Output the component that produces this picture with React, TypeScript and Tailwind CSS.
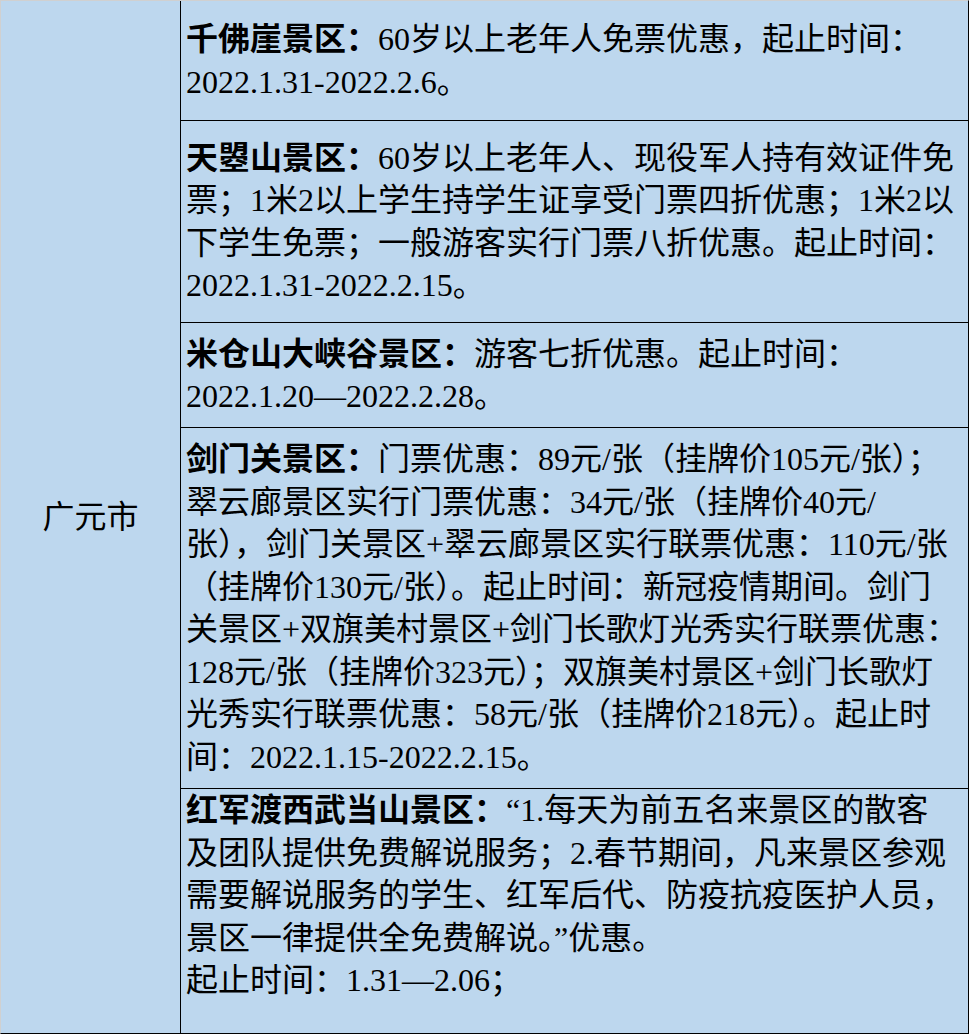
const rows: { h: string; align: string; title: string; lines: string[] }[] = [
  {
    h: 'h-[120px] border-b',
    align: 'justify-center',
    title: '千佛崖景区：',
    lines: ['60岁以上老年人免票优惠，起止时间：', '2022.1.31-2022.2.6。'],
  },
  {
    h: 'h-[202px] border-b',
    align: 'justify-center',
    title: '天曌山景区：',
    lines: [
      '60岁以上老年人、现役军人持有效证件免',
      '票；1米2以上学生持学生证享受门票四折优惠；1米2以',
      '下学生免票；一般游客实行门票八折优惠。起止时间：',
      '2022.1.31-2022.2.15。',
    ],
  },
  {
    h: 'h-[105px] border-b',
    align: 'justify-center',
    title: '米仓山大峡谷景区：',
    lines: ['游客七折优惠。起止时间：', '2022.1.20—2022.2.28。'],
  },
  {
    h: 'h-[361px] border-b',
    align: 'justify-center',
    title: '剑门关景区：',
    lines: [
      '门票优惠：89元/张（挂牌价105元/张）；',
      '翠云廊景区实行门票优惠：34元/张（挂牌价40元/',
      '张），剑门关景区+翠云廊景区实行联票优惠：110元/张',
      '（挂牌价130元/张）。起止时间：新冠疫情期间。剑门',
      '关景区+双旗美村景区+剑门长歌灯光秀实行联票优惠：',
      '128元/张（挂牌价323元）；双旗美村景区+剑门长歌灯',
      '光秀实行联票优惠：58元/张（挂牌价218元）。起止时',
      '间：2022.1.15-2022.2.15。',
    ],
  },
  {
    h: 'flex-1',
    align: 'justify-start',
    title: '红军渡西武当山景区：',
    lines: [
      '“1.每天为前五名来景区的散客',
      '及团队提供免费解说服务；2.春节期间，凡来景区参观',
      '需要解说服务的学生、红军后代、防疫抗疫医护人员，',
      '景区一律提供全免费解说。”优惠。',
      '起止时间：1.31—2.06；',
    ],
  },
];

export default function App() {
  return (
    <div className="w-[969px] h-[1034px] flex bg-[#bdd7ee] text-black border-t border-l border-t-[#d0d0d0] border-l-[#d0d0d0] border-b border-r border-b-black border-r-black font-['Liberation_Serif','Noto_Sans_CJK_SC',serif] text-[32px] leading-[42.5px]">
      {/* city column */}
      <div className="w-[180px] shrink-0 border-r border-black flex items-center justify-center">
        <span>广元市</span>
      </div>

      {/* spots */}
      <div className="flex-1 flex flex-col">
        {rows.map((r, i) => (
          <div key={i} className={`${r.h} border-black flex flex-col ${r.align} pl-[5px] whitespace-nowrap`}>
            {r.lines.map((l, j) => (
              <div key={j}>
                {j === 0 && <span className="font-bold">{r.title}</span>}
                {l}
              </div>
            ))}
          </div>
        ))}
      </div>
    </div>
  );
}
